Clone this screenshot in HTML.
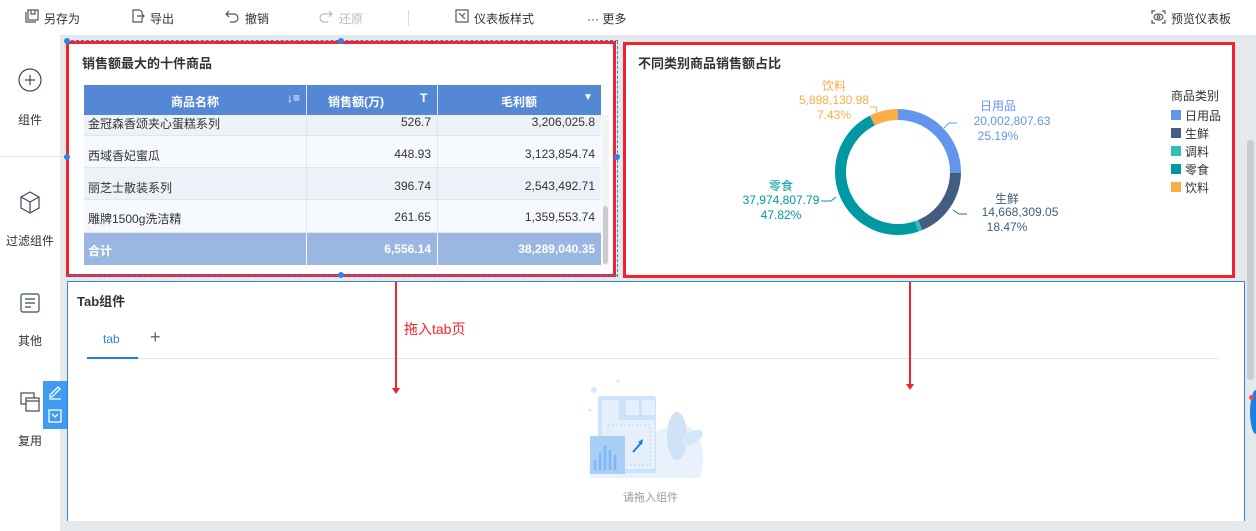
<!DOCTYPE html>
<html><head><meta charset="utf-8"><style>
*{margin:0;padding:0;box-sizing:border-box}
body{width:1256px;height:531px;overflow:hidden;background:#e6e9ec;font-family:"Liberation Sans","Noto Sans CJK SC",sans-serif;font-size:12px;color:#333;position:relative}
.abs{position:absolute}
.tb{left:0;top:0;width:1256px;height:35px;background:#fff;}
.tb span{position:absolute;top:10px;font-size:12px;color:#333}
.side{left:0;top:35px;width:60px;height:496px;background:#fff}
.side .lbl{position:absolute;width:60px;text-align:center;font-size:12px;color:#333}
table{border-collapse:collapse}
.cell{position:absolute;font-size:12px}
</style></head><body>
<div class="abs tb">
 <svg class="abs" style="left:25px;top:9px" width="14" height="14" viewBox="0 0 14 14" fill="none" stroke="#555" stroke-width="1.2"><rect x="3" y="1" width="10" height="10"/><path d="M1 3v10h10M6 1v4h4V1"/></svg>
 <span style="left:44px">另存为</span>
 <svg class="abs" style="left:131px;top:9px" width="14" height="14" viewBox="0 0 14 14" fill="none" stroke="#555" stroke-width="1.2"><path d="M9 1H2v12h9V9M9 1l2 2v2M6 7h7M11 5l2 2-2 2"/></svg>
 <span style="left:150px">导出</span>
 <svg class="abs" style="left:225px;top:9px" width="14" height="14" viewBox="0 0 14 14" fill="none" stroke="#555" stroke-width="1.2"><path d="M4 2L1 5l3 3M1 5h8a4 4 0 010 8H5"/></svg>
 <span style="left:245px">撤销</span>
 <svg class="abs" style="left:319px;top:9px" width="14" height="14" viewBox="0 0 14 14" fill="none" stroke="#bbb" stroke-width="1.2"><path d="M10 2l3 3-3 3M13 5H5a4 4 0 000 8h4"/></svg>
 <span style="left:339px;color:#bbb">还原</span>
 <div class="abs" style="left:408px;top:10px;width:1px;height:16px;background:#ddd"></div>
 <svg class="abs" style="left:455px;top:9px" width="14" height="14" viewBox="0 0 14 14" fill="none" stroke="#555" stroke-width="1.2"><rect x="1" y="1" width="12" height="12"/><path d="M4 4l6 6M10 4l-3 3"/></svg>
 <span style="left:474px">仪表板样式</span>
 <span style="left:587px">··· 更多</span>
 <svg class="abs" style="left:1151px;top:10px" width="15" height="14" viewBox="0 0 15 14" fill="none" stroke="#555" stroke-width="1.2"><path d="M1 4V1h3M11 1h3v3M14 10v3h-3M4 13H1v-3"/><ellipse cx="7.5" cy="7" rx="4.5" ry="3"/><circle cx="7.5" cy="7" r="1.3"/></svg>
 <span style="left:1171px">预览仪表板</span>
</div>
<div class="abs side">
 <svg class="abs" style="left:18px;top:33px" width="24" height="24" viewBox="0 0 24 24" fill="none" stroke="#3d4a5c" stroke-width="1.2"><circle cx="12" cy="12" r="11"/><path d="M12 7v10M7 12h10"/></svg>
 <div class="lbl" style="top:76px">组件</div>
 <div class="abs" style="left:0;top:121px;width:60px;height:1px;background:#e5e5e5"></div>
 <svg class="abs" style="left:19px;top:156px" width="22" height="24" viewBox="0 0 22 24" fill="none" stroke="#3d4a5c" stroke-width="1.2"><path d="M11 1l9 5v11l-9 5-9-5V6zM2 6l9 5 9-5M11 11v11"/></svg>
 <div class="lbl" style="top:197px">过滤组件</div>
 <svg class="abs" style="left:20px;top:258px" width="20" height="20" viewBox="0 0 20 20" fill="none" stroke="#3d4a5c" stroke-width="1.2"><rect x="1" y="1" width="18" height="18" rx="2"/><path d="M5 6h10M5 10h10M5 14h6"/></svg>
 <div class="lbl" style="top:297px">其他</div>
 <svg class="abs" style="left:20px;top:357px" width="20" height="20" viewBox="0 0 20 20" fill="none" stroke="#3d4a5c" stroke-width="1.2"><rect x="1" y="1" width="13" height="11"/><rect x="6" y="6" width="13" height="13" fill="#fff"/><path d="M6 9h13"/></svg>
 <div class="lbl" style="top:397px">复用</div>
</div>
<div class="abs" style="left:43px;top:381px;width:24px;height:48px;background:#3f9cf0"></div>
<svg class="abs" style="left:47px;top:384px" width="16" height="42" viewBox="0 0 16 42" fill="none" stroke="#fff" stroke-width="1.3"><path d="M3 11l8-8 2 2-8 8H3zM2 15h12"/><rect x="2" y="26" width="12" height="12"/><path d="M5 30l3 3 3-3"/></svg>

<!-- table card -->
<div class="abs" style="left:66px;top:41px;width:550px;height:236px;background:#fff;border:3px solid #f2232f"></div>
<div class="abs" style="left:82px;top:53px;font-size:13px;font-weight:bold;color:#333">销售额最大的十件商品</div>
<div class="abs" style="left:84px;top:85px;width:517px;height:30px;background:#5487d4"></div>
<div class="cell" style="left:84px;top:93px;width:222px;text-align:center;color:#fff;font-weight:bold">商品名称</div>
<div class="cell" style="left:287px;top:91px;color:#fff;font-size:12px;font-weight:bold">↓≡</div>
<div class="cell" style="left:306px;top:93px;width:100px;text-align:center;color:#fff;font-weight:bold">销售额(万)</div>
<div class="cell" style="left:420px;top:91px;color:#fff;font-weight:bold">T</div>
<div class="cell" style="left:437px;top:93px;width:164px;text-align:center;color:#fff;font-weight:bold">毛利额</div>
<div class="cell" style="left:583px;top:92px;color:#fff;font-size:10px">▼</div>
<div class="abs" style="left:306px;top:85px;width:1px;height:181px;background:#e0e6ef"></div>
<div class="abs" style="left:437px;top:85px;width:1px;height:181px;background:#e0e6ef"></div>
<div class="abs" style="left:84px;top:115px;width:517px;height:21px;background:#edf1f8;border-bottom:1px solid #e0e6ef"></div>
<div class="abs" style="left:84px;top:136px;width:517px;height:32px;background:#f5f8fc;border-bottom:1px solid #e0e6ef"></div>
<div class="abs" style="left:84px;top:168px;width:517px;height:32px;background:#edf1f8;border-bottom:1px solid #e0e6ef"></div>
<div class="abs" style="left:84px;top:200px;width:517px;height:33px;background:#f5f8fc;border-bottom:1px solid #e0e6ef"></div>
<div class="abs" style="left:84px;top:233px;width:517px;height:32px;background:#9ab7e3"></div>
<div class="abs" style="left:306px;top:115px;width:1px;height:151px;background:#e0e6ef"></div>
<div class="abs" style="left:437px;top:115px;width:1px;height:151px;background:#e0e6ef"></div>
<div class="abs" style="left:306px;top:233px;width:1px;height:32px;background:#fff"></div>
<div class="abs" style="left:437px;top:233px;width:1px;height:32px;background:#fff"></div>
<div class="abs" style="left:602px;top:115px;width:7px;height:150px;background:#f3f3f3"></div>
<div class="abs" style="left:603px;top:206px;width:5px;height:58px;background:#ccc;border-radius:3px"></div>
<div class="cell" style="left:88px;top:115px">金冠森香颂夹心蛋糕系列</div>
<div class="cell" style="left:306px;top:115px;width:125px;text-align:right">526.7</div>
<div class="cell" style="left:437px;top:115px;width:158px;text-align:right">3,206,025.8</div>
<div class="cell" style="left:88px;top:147px">西域香妃蜜瓜</div>
<div class="cell" style="left:306px;top:147px;width:125px;text-align:right">448.93</div>
<div class="cell" style="left:437px;top:147px;width:158px;text-align:right">3,123,854.74</div>
<div class="cell" style="left:88px;top:179px">丽芝士散装系列</div>
<div class="cell" style="left:306px;top:179px;width:125px;text-align:right">396.74</div>
<div class="cell" style="left:437px;top:179px;width:158px;text-align:right">2,543,492.71</div>
<div class="cell" style="left:88px;top:210px">雕牌1500g洗洁精</div>
<div class="cell" style="left:306px;top:210px;width:125px;text-align:right">261.65</div>
<div class="cell" style="left:437px;top:210px;width:158px;text-align:right">1,359,553.74</div>
<div class="cell" style="left:88px;top:242px;color:#fff;font-weight:bold">合计</div>
<div class="cell" style="left:306px;top:242px;width:125px;text-align:right;color:#fff;font-weight:bold">6,556.14</div>
<div class="cell" style="left:437px;top:242px;width:158px;text-align:right;color:#fff;font-weight:bold">38,289,040.35</div>
<div class="abs" style="left:66px;top:40px;width:552px;height:1px;border-top:1px dashed #2b85e4"></div>
<div class="abs" style="left:66px;top:275px;width:552px;height:1px;border-top:1px dashed #2b85e4"></div>
<div class="abs" style="left:617px;top:41px;width:1px;height:236px;border-left:1px dashed #2b85e4"></div>
<div class="abs" style="left:338px;top:38px;width:6px;height:6px;border-radius:3px;background:#2b85e4"></div>
<div class="abs" style="left:338px;top:272px;width:6px;height:6px;border-radius:3px;background:#2b85e4"></div>
<div class="abs" style="left:64px;top:38px;width:6px;height:6px;border-radius:3px;background:#2b85e4"></div>
<div class="abs" style="left:614px;top:154px;width:6px;height:6px;border-radius:3px;background:#2b85e4"></div>
<div class="abs" style="left:64px;top:154px;width:6px;height:6px;border-radius:3px;background:#2b85e4"></div>

<!-- chart card -->
<div class="abs" style="left:623px;top:42px;width:612px;height:236px;background:#fff;border:3px solid #f2232f"></div>
<div class="abs" style="left:638px;top:53px;font-size:13px;font-weight:bold;color:#333">不同类别商品销售额占比</div>
<svg class="abs" style="left:620px;top:60px" width="620" height="200" viewBox="620 60 620 200">
 <g transform="rotate(-90 898 172)" fill="none" stroke-width="11">
  <circle cx="898" cy="172" r="57.5" stroke="#6495ed" stroke-dasharray="91 400"/>
  <circle cx="898" cy="172" r="57.5" stroke="#425d7f" stroke-dasharray="0 91 66.7 400"/>
  <circle cx="898" cy="172" r="57.5" stroke="#2ebfb6" stroke-dasharray="0 157.7 3.9 400"/>
  <circle cx="898" cy="172" r="57.5" stroke="#0098a3" stroke-dasharray="0 161.6 172.8 400"/>
  <circle cx="898" cy="172" r="57.5" stroke="#fbae48" stroke-dasharray="0 334.4 27 400"/>
 </g>
 <path d="M944 128l5-5h8" stroke="#6495ed" fill="none"/>
 <path d="M953 210l6 4h8" stroke="#425d7f" fill="none"/>
 <path d="M836 197l-5 4h-10" stroke="#0098a3" fill="none"/>
 <path d="M877 113l-1-6h-6" stroke="#fbae48" fill="none"/>
 <g font-size="12" text-anchor="middle" font-family="Liberation Sans,Noto Sans CJK SC,sans-serif">
  <text x="998" y="110" fill="#6495ed">日用品</text><text x="1012" y="125" fill="#6495ed">20,002,807.63</text><text x="998" y="140" fill="#6495ed">25.19%</text>
  <text x="1007" y="203" fill="#425d7f">生鲜</text><text x="1020" y="216" fill="#425d7f">14,668,309.05</text><text x="1007" y="231" fill="#425d7f">18.47%</text>
  <text x="781" y="190" fill="#0098a3">零食</text><text x="781" y="204" fill="#0098a3">37,974,807.79</text><text x="781" y="219" fill="#0098a3">47.82%</text>
  <text x="834" y="90" fill="#fbae48">饮料</text><text x="834" y="104" fill="#fbae48">5,898,130.98</text><text x="834" y="119" fill="#fbae48">7.43%</text>
 </g>
 <g font-size="12" font-family="Liberation Sans,Noto Sans CJK SC,sans-serif" fill="#333">
  <text x="1171" y="100">商品类别</text>
  <rect x="1171" y="110" width="10" height="10" fill="#6495ed"/><text x="1185" y="120">日用品</text>
  <rect x="1171" y="128" width="10" height="10" fill="#425d7f"/><text x="1185" y="138">生鲜</text>
  <rect x="1171" y="146" width="10" height="10" fill="#2ebfb6"/><text x="1185" y="156">调料</text>
  <rect x="1171" y="164" width="10" height="10" fill="#0098a3"/><text x="1185" y="174">零食</text>
  <rect x="1171" y="182" width="10" height="10" fill="#fbae48"/><text x="1185" y="192">饮料</text>
 </g>
</svg>

<!-- scrollbar -->
<div class="abs" style="left:1246px;top:35px;width:10px;height:490px;background:#e6e9ec"></div>
<div class="abs" style="left:1247px;top:140px;width:7px;height:240px;background:#c9ccd0;border-radius:4px"></div>
<div class="abs" style="left:1250px;top:390px;width:12px;height:44px;border-radius:50%;background:#1a7fe0"></div>
<div class="abs" style="left:1249px;top:395px;width:5px;height:5px;border-radius:3px;background:#f44"></div>

<!-- tab component -->
<div class="abs" style="left:67px;top:281px;width:1178px;height:240px;background:#fff;border:1px solid #2b85e4;border-bottom:none"></div>
<div class="abs" style="left:77px;top:291px;font-size:13px;font-weight:bold;color:#333">Tab组件</div>
<div class="abs" style="left:103px;top:332px;font-size:12px;color:#2b85e4">tab</div>
<div class="abs" style="left:150px;top:328px;font-size:18px;color:#666;line-height:18px">+</div>
<div class="abs" style="left:87px;top:358px;width:1132px;height:1px;background:#e5e5e5"></div>
<div class="abs" style="left:87px;top:357px;width:51px;height:2px;background:#1a7fe0"></div>
<div class="abs" style="left:404px;top:319px;font-size:14px;color:#f2232f">拖入tab页</div>
<div class="abs" style="left:395px;top:282px;width:2px;height:108px;background:#f2232f"></div>
<div class="abs" style="left:392px;top:388px;border:4px solid transparent;border-top:6px solid #f2232f"></div>
<div class="abs" style="left:909px;top:282px;width:2px;height:104px;background:#f2232f"></div>
<div class="abs" style="left:906px;top:384px;border:4px solid transparent;border-top:6px solid #f2232f"></div>
<svg class="abs" style="left:580px;top:378px" width="140" height="105" viewBox="0 0 140 105">
 <path d="M10 100c-5-20 10-30 30-35l60-20c20 5 28 25 20 55z" fill="#e8f1fc"/>
 <ellipse cx="97" cy="58" rx="10" ry="24" fill="#cfe2f8"/>
 <ellipse cx="112" cy="60" rx="12" ry="6" fill="#d6e7fa" transform="rotate(-30 112 60)"/>
 <rect x="18" y="18" width="58" height="77" rx="3" fill="#cde3fb"/>
 <rect x="22" y="22" width="17" height="20" fill="#e6f0fd"/>
 <rect x="46" y="22" width="13" height="15" fill="#e6f0fd"/><rect x="62" y="22" width="13" height="15" fill="#e6f0fd"/>
 <rect x="22" y="42" width="53" height="49" fill="#e6f0fd"/>
 <rect x="28" y="47" width="42" height="40" fill="none" stroke="#b8d6f6" stroke-dasharray="2 2"/>
 <rect x="10" y="58" width="35" height="38" fill="#a9cff7"/>
 <path d="M15 92v-10M20 92v-17M25 92v-24M30 92v-20M35 92v-15" stroke="#7fb8f2" stroke-width="2.5"/>
 <path d="M53 74l8-9" stroke="#1a7fe0" stroke-width="2"/><path d="M58 64l5-3-1 6z" fill="#1a7fe0"/>
 <circle cx="14" cy="12" r="3" fill="#d8e8fb"/><circle cx="38" cy="3" r="1.5" fill="#d8e8fb"/><circle cx="10" cy="32" r="1.5" fill="#d8e8fb"/>
</svg>
<div class="abs" style="left:623px;top:489px;font-size:11px;color:#999">请拖入组件</div>
</body></html>
